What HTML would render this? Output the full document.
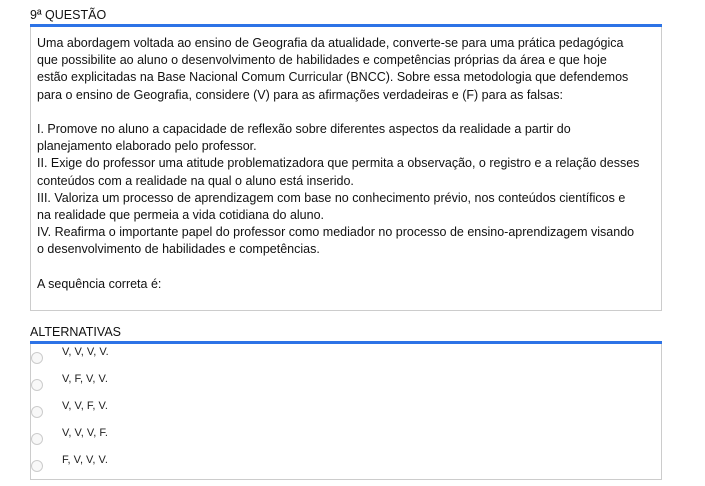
<!DOCTYPE html>
<html><head><meta charset="utf-8"><style>
*{margin:0;padding:0;box-sizing:border-box}
body{width:705px;height:486px;background:#fff;font-family:"Liberation Sans",sans-serif;color:#111;position:relative;overflow:hidden}
.h{position:absolute;left:30px;font-size:12.5px;color:#111}
.bar{position:absolute;left:30px;width:632px;height:3px;background:#2d73e6}
.box{position:absolute;left:30px;width:632px;border:1px solid #ccc;border-top:none}
.q{position:absolute;left:37px;top:35px;font-size:12.5px;line-height:17.2px;width:624px}
.r{position:absolute;left:31px;width:12px;height:12px;border:1px solid #ccc;border-radius:50%;background:#f8f8f8}
.t{position:absolute;left:62px;font-size:11px;color:#222}
</style></head><body>
<div class="h" style="top:8px">9ª QUESTÃO</div>
<div class="bar" style="top:24px"></div>
<div class="box" style="top:27px;height:284px"></div>
<div class="q">Uma abordagem voltada ao ensino de Geografia da atualidade, converte-se para uma prática pedagógica<br>que possibilite ao aluno o desenvolvimento de habilidades e competências próprias da área e que hoje<br>estão explicitadas na Base Nacional Comum Curricular (BNCC). Sobre essa metodologia que defendemos<br>para o ensino de Geografia, considere (V) para as afirmações verdadeiras e (F) para as falsas:<br><br>I. Promove no aluno a capacidade de reflexão sobre diferentes aspectos da realidade a partir do<br>planejamento elaborado pelo professor.<br>II. Exige do professor uma atitude problematizadora que permita a observação, o registro e a relação desses<br>conteúdos com a realidade na qual o aluno está inserido.<br>III. Valoriza um processo de aprendizagem com base no conhecimento prévio, nos conteúdos científicos e<br>na realidade que permeia a vida cotidiana do aluno.<br>IV. Reafirma o importante papel do professor como mediador no processo de ensino-aprendizagem visando<br>o desenvolvimento de habilidades e competências.<br><br>A sequência correta é:</div>
<div class="h" style="top:325px">ALTERNATIVAS</div>
<div class="bar" style="top:341px"></div>
<div class="box" style="top:344px;height:136px"></div>
<div class="r" style="top:352px"></div><div class="t" style="top:346px">V, V, V, V.</div>
<div class="r" style="top:379px"></div><div class="t" style="top:373px">V, F, V, V.</div>
<div class="r" style="top:406px"></div><div class="t" style="top:400px">V, V, F, V.</div>
<div class="r" style="top:433px"></div><div class="t" style="top:427px">V, V, V, F.</div>
<div class="r" style="top:460px"></div><div class="t" style="top:454px">F, V, V, V.</div>
</body></html>
